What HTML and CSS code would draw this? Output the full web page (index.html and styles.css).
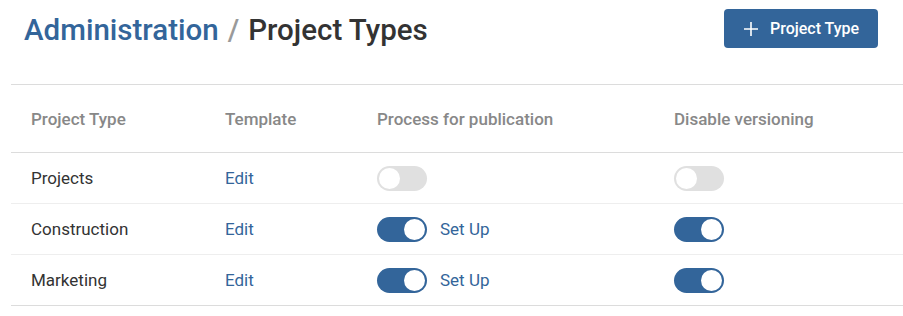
FILE: index.html
```html
<!DOCTYPE html>
<html>
<head>
<meta charset="utf-8">
<link rel="stylesheet" href="styles.css">
</head>
<body>
<div class="page">
  <header class="top">
    <h1 class="title"><span class="crumb">Administration</span><span class="sep">/</span><span class="current">Project Types</span></h1>
    <button class="add-btn"><svg class="plus" width="14" height="14" viewBox="0 0 14 14"><path d="M7 0V14M0 7H14" stroke="#fff" stroke-width="1.6" fill="none"/></svg><span>Project Type</span></button>
  </header>
  <div class="table">
    <div class="row head">
      <div class="c1">Project Type</div>
      <div class="c2">Template</div>
      <div class="c3">Process for publication</div>
      <div class="c4">Disable versioning</div>
    </div>
    <div class="row">
      <div class="c1">Projects</div>
      <div class="c2"><a class="link">Edit</a></div>
      <div class="c3"><span class="toggle"></span></div>
      <div class="c4"><span class="toggle"></span></div>
    </div>
    <div class="row">
      <div class="c1">Construction</div>
      <div class="c2"><a class="link">Edit</a></div>
      <div class="c3"><span class="toggle on"></span><a class="link setup">Set Up</a></div>
      <div class="c4"><span class="toggle on"></span></div>
    </div>
    <div class="row last">
      <div class="c1">Marketing</div>
      <div class="c2"><a class="link">Edit</a></div>
      <div class="c3"><span class="toggle on"></span><a class="link setup">Set Up</a></div>
      <div class="c4"><span class="toggle on"></span></div>
    </div>
  </div>
</div>
</body>
</html>
```
FILE: styles.css
```css
* { box-sizing: border-box; }
body {
  margin: 0;
  font-family: Roboto, "Liberation Sans", sans-serif;
  background: #fff;
  color: #333;
}
.page { padding: 0 0 0 11px; }
.top {
  display: flex;
  align-items: flex-start;
  justify-content: space-between;
  padding: 9px 25px 0 13px;
  height: 84px;
}
.title {
  margin: 0;
  font-size: 29.5px;
  font-weight: 500;
  line-height: 42px;
}
.crumb { color: #33659a; }
.sep { color: #9a9a9a; margin: 0 9px; }
.current { color: #333; }
.add-btn {
  display: flex;
  align-items: center;
  gap: 12px;
  height: 39px;
  width: 154px;
  padding: 0 0 0 20px;
  border: none;
  border-radius: 4px;
  background: #33659a;
  color: #fff;
  font-family: inherit;
  font-size: 16px;
  font-weight: 500;
}
.table { border-top: 1px solid #dcdcdc; }
.row {
  display: grid;
  grid-template-columns: 194px 152px 297px 1fr;
  align-items: center;
  height: 51px;
  border-bottom: 1px solid #eeeeee;
  font-size: 17px;
  color: #333;
}
.row > div { padding-left: 20px; display: flex; align-items: center; }
.row.head {
  height: 68px;
  border-bottom: 1px solid #dcdcdc;
  color: #888;
  font-size: 17px;
  font-weight: 500;
}
.row.last { border-bottom: 1px solid #dcdcdc; }
.link { color: #33659a; font-size: 17px; }
.setup { margin-left: 13px; }
.toggle {
  position: relative;
  display: inline-block;
  width: 50px;
  height: 25px;
  border-radius: 13px;
  background: #e0e0e0;
}
.toggle::after {
  content: "";
  position: absolute;
  top: 2px;
  left: 2px;
  width: 21px;
  height: 21px;
  border-radius: 50%;
  background: #fff;
}
.toggle.on { background: #33659a; }
.toggle.on::after { left: 27px; }
```
